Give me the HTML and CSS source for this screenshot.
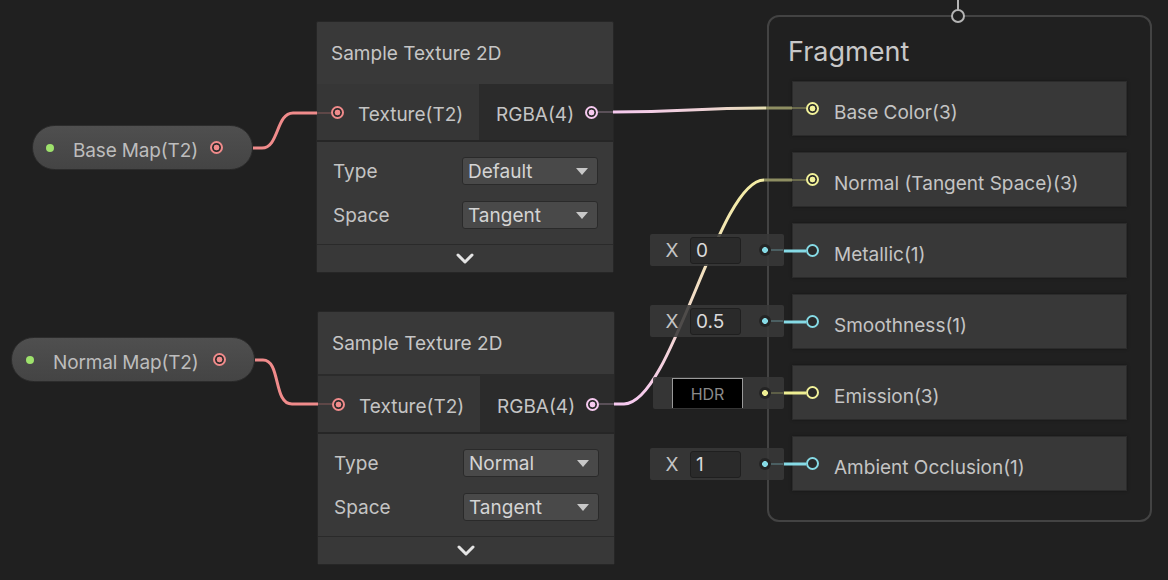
FILE: index.html
```html
<!DOCTYPE html>
<html>
<head>
<meta charset="utf-8">
<link rel="stylesheet" href="styles.css">
</head>
<body>
<div class="canvas">

  <div class="context">
    <div class="ctx-title">Fragment</div>
    <div class="blocks">
      <div class="block"><span class="port port--vec3"></span><span class="block-label">Base Color(3)</span></div>
      <div class="block"><span class="port port--vec3"></span><span class="block-label">Normal (Tangent Space)(3)</span></div>
      <div class="block"><span class="port port--float port--hollow"></span><span class="block-label">Metallic(1)</span></div>
      <div class="block"><span class="port port--float port--hollow"></span><span class="block-label">Smoothness(1)</span></div>
      <div class="block"><span class="port port--vec3 port--hollow"></span><span class="block-label">Emission(3)</span></div>
      <div class="block"><span class="port port--float port--hollow"></span><span class="block-label">Ambient Occlusion(1)</span></div>
    </div>
  </div>
  <div class="ctx-port-line"></div>
  <div class="ctx-port"></div>

  <div class="prop prop--base">
    <span class="prop-dot"></span>
    <span class="prop-label">Base Map(T2)</span>
    <span class="port port--tex"></span>
  </div>
  <div class="prop prop--normal">
    <span class="prop-dot"></span>
    <span class="prop-label">Normal Map(T2)</span>
    <span class="port port--tex"></span>
  </div>

  <div class="node node--a">
    <div class="node-title">Sample Texture 2D</div>
    <div class="ports">
      <div class="ports-in"><span class="port port--tex"></span><span class="port-label">Texture(T2)</span></div>
      <div class="ports-out"><span class="port-label">RGBA(4)</span><span class="port port--vec4"></span></div>
    </div>
    <div class="controls">
      <div class="ctrl"><span>Type</span><div class="dropdown"><span>Default</span><span class="caret"></span></div></div>
      <div class="ctrl"><span>Space</span><div class="dropdown"><span>Tangent</span><span class="caret"></span></div></div>
    </div>
    <div class="expand"><svg width="18" height="11" viewBox="0 0 18 11"><polyline points="2,2 9,9 16,2" fill="none" stroke="#e4e4e4" stroke-width="3" stroke-linecap="round" stroke-linejoin="round"/></svg></div>
  </div>

  <div class="node node--b">
    <div class="node-title">Sample Texture 2D</div>
    <div class="ports">
      <div class="ports-in"><span class="port port--tex"></span><span class="port-label">Texture(T2)</span></div>
      <div class="ports-out"><span class="port-label">RGBA(4)</span><span class="port port--vec4"></span></div>
    </div>
    <div class="controls">
      <div class="ctrl"><span>Type</span><div class="dropdown"><span>Normal</span><span class="caret"></span></div></div>
      <div class="ctrl"><span>Space</span><div class="dropdown"><span>Tangent</span><span class="caret"></span></div></div>
    </div>
    <div class="expand"><svg width="18" height="11" viewBox="0 0 18 11"><polyline points="2,2 9,9 16,2" fill="none" stroke="#e4e4e4" stroke-width="3" stroke-linecap="round" stroke-linejoin="round"/></svg></div>
  </div>

  <svg class="edges" width="1168" height="580" viewBox="0 0 1168 580">
    <defs>
      <linearGradient id="gBase" gradientUnits="userSpaceOnUse" x1="613" y1="0" x2="768" y2="0">
        <stop offset="0" stop-color="#f6c9ef"/>
        <stop offset="0.6" stop-color="#eed2d6"/>
        <stop offset="1" stop-color="#e6e0b0"/>
      </linearGradient>
      <linearGradient id="gNormal" gradientUnits="userSpaceOnUse" x1="0" y1="404" x2="0" y2="182">
        <stop offset="0" stop-color="#f6c9ef"/>
        <stop offset="0.45" stop-color="#f2dcc8"/>
        <stop offset="1" stop-color="#f3eca4"/>
      </linearGradient>
    </defs>
    <g fill="none" stroke-width="3">
      <path d="M253,148 L262,148 C279,148 276,113 293,113 L317,113" stroke="#f08b8b"/>
      <path d="M255,360 L263,360 C281,360 273,404 292,404 L318,404" stroke="#f08b8b"/>
      <path d="M613,112 C690,112 690,108 766,108" stroke="url(#gBase)"/>
      <path d="M766,108 L792,108" stroke="#8e8e62"/>
      <path d="M614,404 L624,404 C672,404 718,180 764,180" stroke="url(#gNormal)"/>
      <path d="M764,180 L792,180" stroke="#8e8e62"/>
      <path d="M783,251 L806,251" stroke="#86dbe6"/>
      <path d="M783,322 L806,322" stroke="#86dbe6"/>
      <path d="M783,393 L806,393" stroke="#eeee92"/>
      <path d="M783,464 L806,464" stroke="#86dbe6"/>
    </g>
    <g fill="none" stroke-width="2">
      <path d="M317,113 L331,113" stroke="#5e4747"/>
      <path d="M598,112 L613,112" stroke="#5a5058"/>
      <path d="M318,404 L332,404" stroke="#5e4747"/>
      <path d="M599,404 L614,404" stroke="#5a5058"/>
      <path d="M792,108 L806,108" stroke="#6a6a4c"/>
      <path d="M792,180 L806,180" stroke="#6a6a4c"/>
    </g>
  </svg>

  <div class="inline inline--metallic">
    <span class="inline-x">X</span>
    <span class="inline-field">0</span>
    <span class="inline-dot inline-dot--float"></span>
    <span class="inline-stub inline-stub--float"></span>
  </div>
  <div class="inline inline--smooth">
    <span class="inline-x">X</span>
    <span class="inline-field">0.5</span>
    <span class="inline-dot inline-dot--float"></span>
    <span class="inline-stub inline-stub--float"></span>
  </div>
  <div class="inline inline--emission">
    <span class="hdr">HDR</span>
    <span class="inline-dot inline-dot--vec3 inline-dot--hdr"></span>
    <span class="inline-stub inline-stub--vec3"></span>
  </div>
  <div class="inline inline--ao">
    <span class="inline-x">X</span>
    <span class="inline-field">1</span>
    <span class="inline-dot inline-dot--float"></span>
    <span class="inline-stub inline-stub--float"></span>
  </div>

</div>
</body>
</html>
```

FILE: styles.css
```css
* {
  box-sizing: border-box;
  margin: 0;
  padding: 0;
}

html, body {
  width: 1168px;
  height: 580px;
  overflow: hidden;
  background: #202020;
}

body {
  font-family: Inter, "Noto Sans", sans-serif;
  font-size: 19px;
  color: #c4c4c4;
}

.canvas {
  position: relative;
  width: 1168px;
  height: 580px;
}

/* ports */
.port {
  --c: #f08b8b;
  flex: none;
  width: 13px;
  height: 13px;
  border-radius: 50%;
  border: 2px solid var(--c);
  background: radial-gradient(circle, var(--c) 0 2.6px, #2a2a2a 3.2px);
}
.port--tex { --c: #f08b8b; }
.port--vec4 { --c: #f6c9ef; }
.port--vec3 { --c: #f2f29a; }
.port--float { --c: #86dbe6; }
.port--hollow { background: #2a2a2a; }

/* context */
.context {
  position: absolute;
  left: 767px;
  top: 15px;
  width: 385px;
  height: 507px;
  border: 2px solid #434343;
  border-radius: 12px;
  padding: 0 23px 0 23px;
}

.ctx-title {
  height: 64px;
  padding-top: 4px;
  margin-left: -4px;
  display: flex;
  align-items: center;
  font-size: 27px;
  color: #c8c8c8;
}

.blocks {
  display: flex;
  flex-direction: column;
  gap: 16px;
}

.block {
  height: 55px;
  background: #383838;
  border: 1px solid #2b2b2b;
  box-shadow: 0 0 3px rgba(0, 0, 0, 0.35);
  display: flex;
  align-items: center;
  padding-left: 13px;
  gap: 15px;
}
.block-label {
  padding-top: 7px;
}

.ctx-port-line {
  position: absolute;
  left: 957px;
  top: 0;
  width: 2px;
  height: 11px;
  background: #b4b4b4;
}

.ctx-port {
  position: absolute;
  left: 951px;
  top: 9px;
  width: 14px;
  height: 14px;
  border-radius: 50%;
  border: 2px solid #b4b4b4;
  background: #202020;
}

/* property pills */
.prop {
  position: absolute;
  height: 45px;
  border-radius: 23px;
  background: linear-gradient(#4f4f4f, #444444);
  border: 1px solid #2c2c2c;
  display: flex;
  align-items: center;
  color: #bdbdbd;
}
.prop--base {
  left: 32px;
  top: 125px;
  width: 221px;
  padding: 0 29px 0 13px;
}
.prop--normal {
  left: 11px;
  top: 337px;
  width: 244px;
  padding: 0 28px 0 14px;
}
.prop-dot {
  width: 8px;
  height: 8px;
  border-radius: 50%;
  background: #9ee26c;
  margin-right: 19px;
}
.prop-label {
  padding-top: 6px;
  letter-spacing: -0.15px;
}
.prop .port {
  margin-left: auto;
}

/* nodes */
.node {
  position: absolute;
  width: 298px;
  background: #393939;
  border: 1px solid #262626;
  border-radius: 2px;
  display: flex;
  flex-direction: column;
}
.node--a {
  left: 316px;
  top: 21px;
}
.node--b {
  left: 317px;
  top: 311px;
}
.node-title {
  height: 62px;
  display: flex;
  align-items: center;
  padding-left: 14px;
  color: #c6c6c6;
}
.node--b .node-title {
  height: 64px;
  border-bottom: 2px solid #2b2b2b;
}
.ports {
  display: flex;
  height: 58px;
  border-bottom: 2px solid #262626;
}
.ports-in {
  width: 162px;
  background: #363636;
  display: flex;
  align-items: center;
  padding-left: 14px;
  gap: 14px;
}
.ports-out {
  flex: 1;
  background: #2b2b2b;
  display: flex;
  align-items: center;
  justify-content: space-between;
  padding: 0 15px 0 17px;
}
.port-label {
  padding-top: 5px;
}
.controls {
  display: flex;
  flex-direction: column;
  gap: 16px;
  padding: 15px 15px 15px 16px;
}
.ctrl {
  height: 28px;
  display: flex;
  align-items: center;
  justify-content: space-between;
}
.dropdown {
  width: 136px;
  height: 28px;
  background: #494949;
  border: 1px solid #2a2a2a;
  border-radius: 3px;
  display: flex;
  align-items: center;
  justify-content: space-between;
  padding: 0 9px 0 5px;
  color: #d4d4d4;
}
.caret {
  width: 0;
  height: 0;
  border-left: 6px solid transparent;
  border-right: 6px solid transparent;
  border-top: 7px solid #c8c8c8;
}
.expand {
  height: 28px;
  border-top: 1px solid #2a2a2a;
  background: #383838;
  display: flex;
  align-items: center;
  justify-content: center;
}

/* edges */
.edges {
  position: absolute;
  left: 0;
  top: 0;
  pointer-events: none;
}

/* inline value nodes */
.inline {
  position: absolute;
  height: 32px;
  background: rgba(56, 56, 56, 0.88);
  border-radius: 2px;
  display: flex;
  align-items: center;
}
.inline--metallic { left: 650px; top: 234px; width: 134px; }
.inline--smooth { left: 650px; top: 305px; width: 134px; }
.inline--emission { left: 653px; top: 377px; width: 131px; }
.inline--ao { left: 650px; top: 448px; width: 134px; }

.inline-x {
  width: 24px;
  margin-left: 10px;
  text-align: center;
}
.inline-field {
  margin-left: 6px;
  width: 51px;
  height: 27px;
  background: #2a2a2a;
  border: 1px solid #1f1f1f;
  border-radius: 3px;
  padding-left: 5px;
  display: flex;
  align-items: center;
  color: #dadada;
}
.inline-dot {
  --c: #86dbe6;
  margin-left: 18px;
  width: 12px;
  height: 12px;
  border-radius: 50%;
  background: radial-gradient(circle, var(--c) 0 2.6px, #242424 3.2px);
}
.inline-dot--vec3 { --c: #eeee92; }
.inline-dot--hdr { margin-left: 16px; }
.inline-stub {
  width: 12px;
  height: 2px;
  background: #4b5f62;
}
.inline-stub--vec3 { background: #5d5e47; }

.hdr {
  margin-left: 19px;
  width: 71px;
  height: 30px;
  background: #000;
  border: 1px solid #9a9a9a;
  border-bottom: none;
  display: flex;
  align-items: center;
  justify-content: center;
  font-size: 16px;
  color: #8a8a8a;
}
```
